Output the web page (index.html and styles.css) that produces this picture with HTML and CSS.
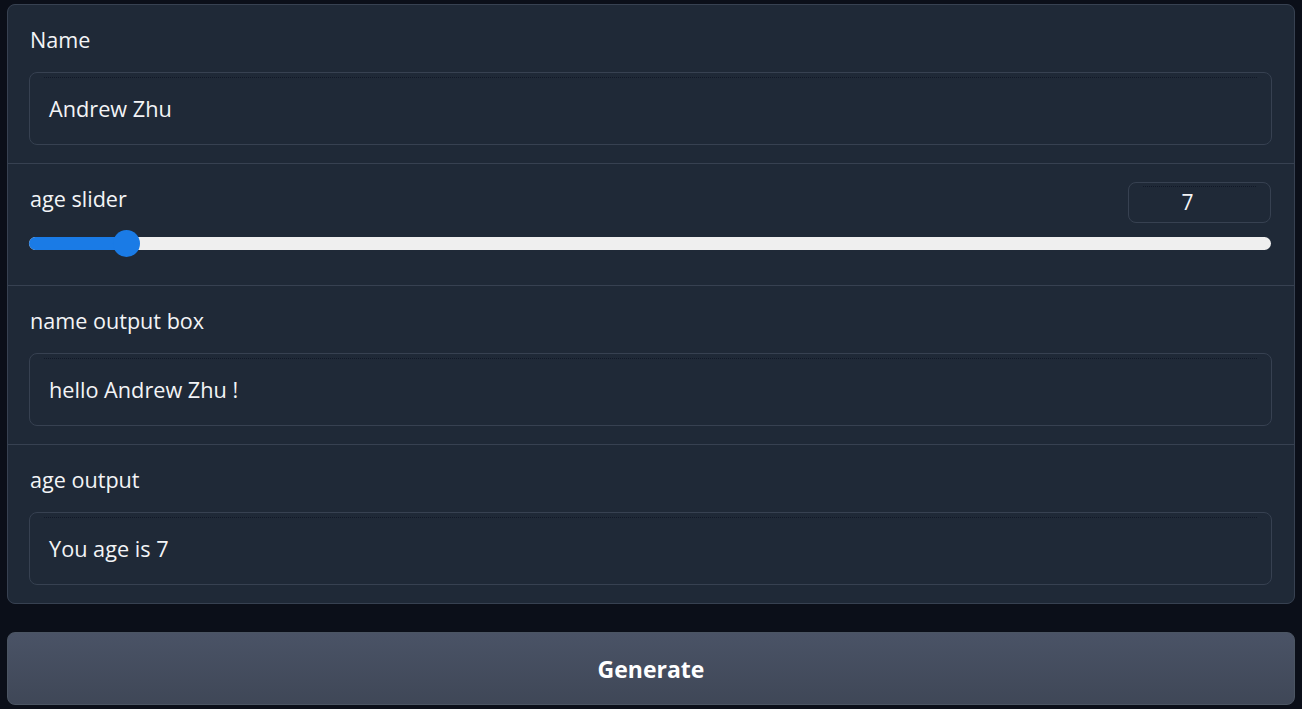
FILE: index.html
```html
<!DOCTYPE html>
<html>
<head>
<meta charset="utf-8">
<link rel="stylesheet" href="styles.css">
</head>
<body>
<div class="app">
  <div class="form">
    <div class="block">
      <div class="label">Name</div>
      <div class="field">Andrew Zhu</div>
    </div>
    <div class="block slider-block">
      <div class="slider-head">
        <div class="label">age slider</div>
        <div class="number">7</div>
      </div>
      <div class="track">
        <div class="fill" style="width: 7.8%"></div>
        <div class="thumb" style="left: 7.8%"></div>
      </div>
    </div>
    <div class="block">
      <div class="label">name output box</div>
      <div class="field">hello Andrew Zhu !</div>
    </div>
    <div class="block">
      <div class="label">age output</div>
      <div class="field">You age is 7</div>
    </div>
  </div>
  <button class="btn">Generate</button>
</div>
</body>
</html>
```

FILE: styles.css
```css
html, body {
  margin: 0;
  padding: 0;
  background: #0b0f19;
}
body {
  font-family: "Open Sans", "Noto Sans", sans-serif;
  color: #f3f4f6;
}
.app {
  padding: 4px 7px 0 7px;
  display: flex;
  flex-direction: column;
  gap: 28px;
}
.form {
  display: flex;
  flex-direction: column;
  gap: 1px;
  background: #374151;
  border: 1px solid #374151;
  border-radius: 8px;
  overflow: hidden;
}
.block {
  background: #1f2937;
  padding: 20px 22px 18px 21px;
  display: flex;
  flex-direction: column;
}
.label {
  font-size: 21.6px;
  line-height: 30px;
  height: 30px;
  margin-bottom: 17px;
  padding-left: 1px;
  color: #f3f4f6;
}
.field {
  position: relative;
  height: 71px;
  border: 1px solid #374151;
  border-radius: 8px;
  background: #1f2937;
  font-size: 21.7px;
  line-height: 71px;
  padding: 0 19px;
}
.field::before {
  content: "";
  position: absolute;
  left: 14px;
  right: 14px;
  top: 4px;
  border-top: 1px dotted #111827;
}
.slider-block {
  padding-top: 18px;
  padding-bottom: 35px;
}
.slider-head {
  display: flex;
  justify-content: space-between;
  align-items: flex-start;
  height: 41px;
}
.slider-head .label {
  margin: 2px 0 0 0;
}
.number {
  position: relative;
  box-sizing: border-box;
  width: 143px;
  height: 41px;
  border: 1px solid #374151;
  border-radius: 8px;
  text-align: center;
  font-size: 21px;
  line-height: 39px;
  padding-right: 24px;
  margin-right: 1px;
}
.number::before {
  content: "";
  position: absolute;
  left: 14px;
  right: 14px;
  top: 3px;
  border-top: 1px dotted #111827;
}
.track {
  position: relative;
  margin-top: 14px;
  height: 13px;
  border-radius: 7px;
  background: #efefef;
  margin-right: 1px;
}
.fill {
  position: absolute;
  left: 0;
  top: 0;
  bottom: 0;
  background: #1a7be6;
  border-radius: 7px 0 0 7px;
}
.thumb {
  position: absolute;
  top: 50%;
  width: 27px;
  height: 27px;
  margin-left: -13px;
  margin-top: -13.5px;
  border-radius: 50%;
  background: #1a7be6;
}
.btn {
  height: 73px;
  border: 1px solid #4b5563;
  border-radius: 8px;
  background: linear-gradient(180deg, #4a5366 0%, #3f4757 100%);
  color: #ffffff;
  font-family: "Open Sans", "Noto Sans", sans-serif;
  font-weight: 700;
  font-size: 23px;
  cursor: pointer;
}
```
